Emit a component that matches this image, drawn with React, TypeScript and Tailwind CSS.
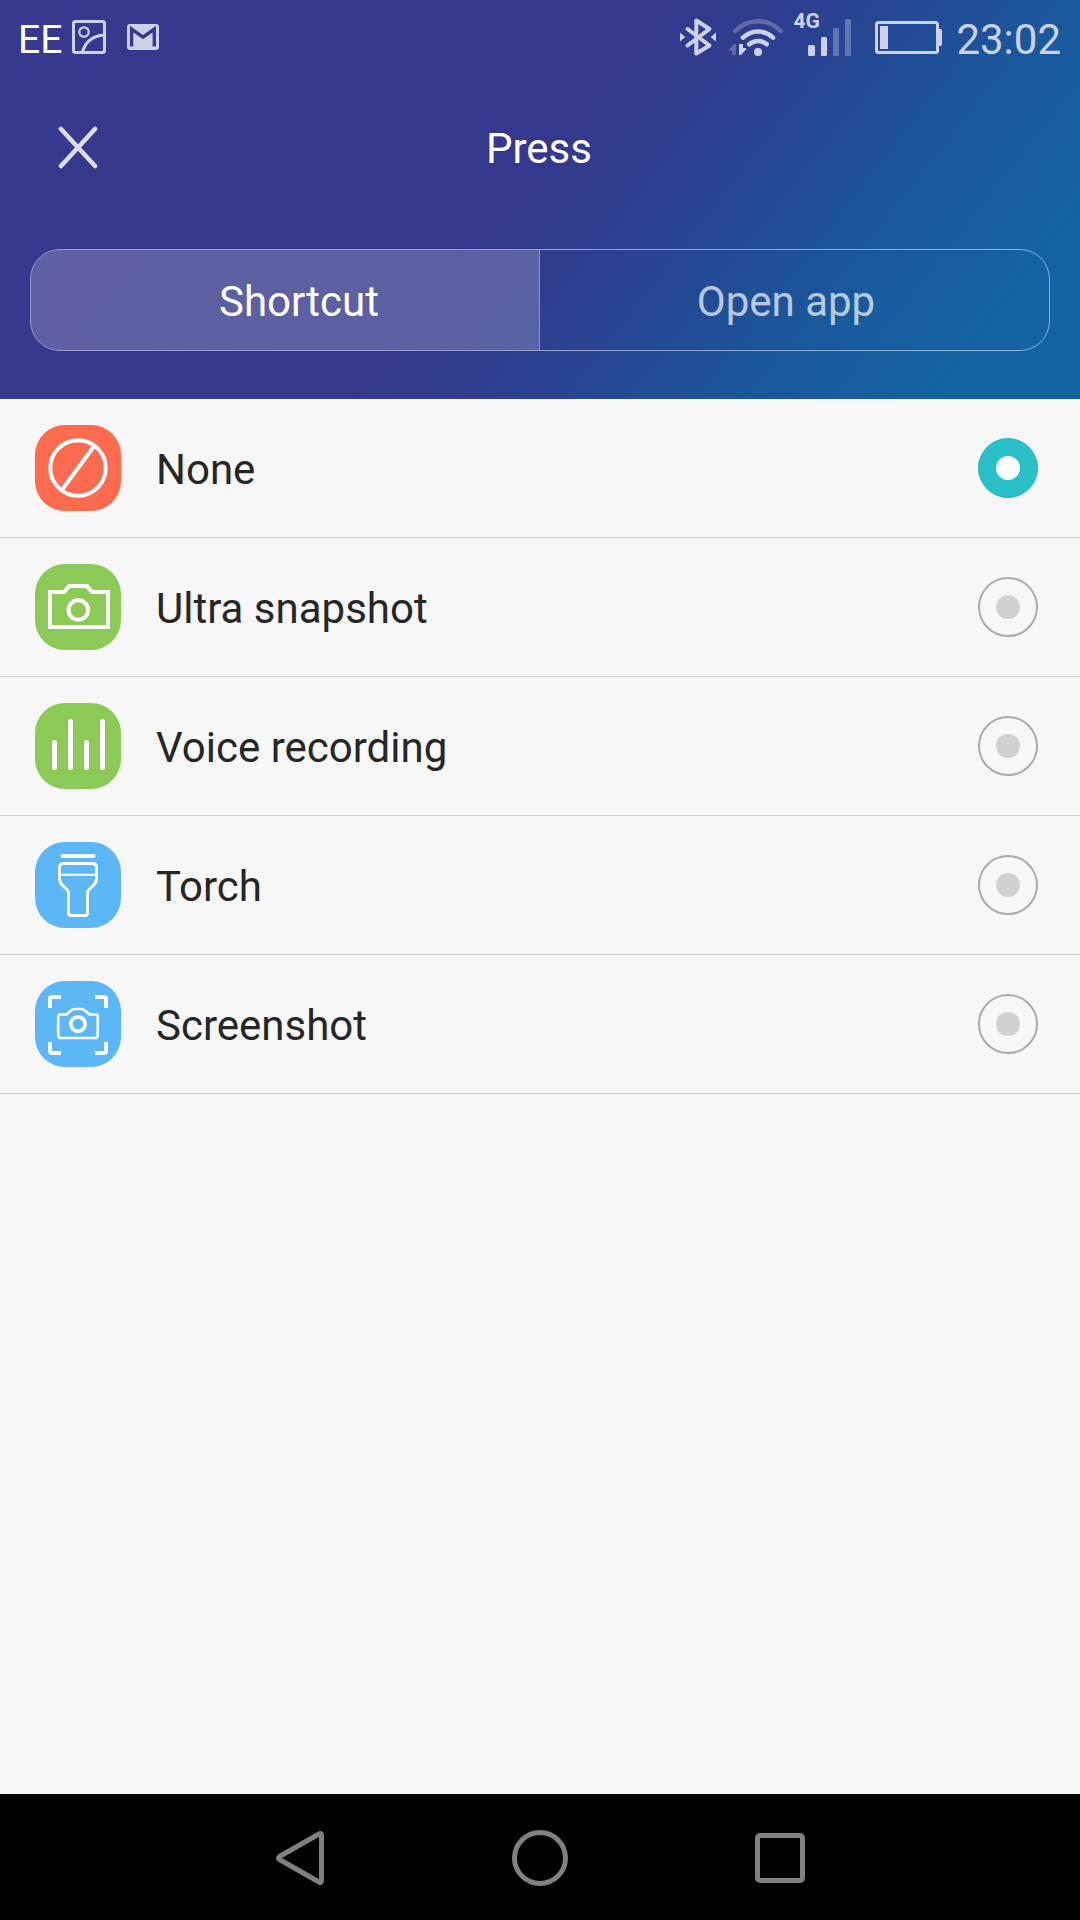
import React, { useState } from "react";

const NoneIcon = () => (
    <svg viewBox="0 0 86 86" className="size-[86px]" fill="none" stroke="white" strokeWidth="4">
        <circle cx="43" cy="43" r="27.7" />
        <path d="M59.5 20.5 26.5 65.5" />
    </svg>
);

const CameraIcon = () => (
    <svg viewBox="0 0 86 86" className="size-[86px]" fill="none" stroke="white" strokeWidth="4">
        <path d="M15 28H29.3L34 22H52L57 28H73V63H15Z" />
        <circle cx="43.3" cy="46" r="9.8" />
    </svg>
);

const VoiceIcon = () => (
    <svg viewBox="0 0 86 86" className="size-[86px]" fill="none" stroke="white" strokeWidth="5" strokeLinecap="round">
        <path d="M19.5 39.5V64.5M35.5 18.5V64.5M51.5 39.5V64.5M67.5 18.5V64.5" />
    </svg>
);

const TorchIcon = () => (
    <svg viewBox="0 0 86 86" className="size-[86px]" fill="none" stroke="white" strokeWidth="3">
        <path d="M27.5 14H58.5" strokeWidth="4" strokeLinecap="round" />
        <path d="M24.5 25.5q0-4 4-4H57.5q4 0 4 4V36C61.5 46 52.5 44.5 52.5 51V71q0 2.5-2.5 2.5H36q-2.5 0-2.5-2.5V51C33.5 44.5 24.5 46 24.5 36Z" />
        <path d="M24.5 32.7H61.5" strokeWidth="2" />
    </svg>
);

const ScreenshotIcon = () => (
    <svg viewBox="0 0 86 86" className="size-[86px]" fill="none" stroke="white" strokeWidth="4">
        <path d="M15 27V18q0-2 2-2H26M60 16H69q2 0 2 2V27M71 61V70q0 2-2 2H60M26 72H17q-2 0-2-2V61" />
        <path
            d="M26 33.3H31.5L36 29.5Q38 28 40 28H46Q48 28 50 29.5L54.5 33.3H60q2.8 0 2.8 2.8V54.2q0 2.8-2.8 2.8H26q-2.8 0-2.8-2.8V36.1q0-2.8 2.8-2.8Z"
            strokeWidth="2.7"
        />
        <circle cx="43" cy="43" r="7.2" strokeWidth="3.8" />
    </svg>
);

const options = [
    { label: "None", color: "bg-[#ff6b4f]", Icon: NoneIcon },
    { label: "Ultra snapshot", color: "bg-[#8bca57]", Icon: CameraIcon },
    { label: "Voice recording", color: "bg-[#8bca57]", Icon: VoiceIcon },
    { label: "Torch", color: "bg-[#5cb7f7]", Icon: TorchIcon },
    { label: "Screenshot", color: "bg-[#5cb7f7]", Icon: ScreenshotIcon },
];

// Every status icon is 74px tall, its viewBox starts at its own x on the bar
const StatusBar = () => (
    <div className="flex h-[74px] items-start justify-between pl-[18px] pr-[19px] text-[#cdd1e7]">
        <div className="flex items-start">
            <span className="w-[54px] pt-[18px] text-[39px] leading-[44px] text-white">EE</span>
            <svg viewBox="72 0 34 74" className="h-[74px] w-[34px]" fill="none" stroke="currentColor">
                <rect x="73.5" y="21.5" width="31" height="31" rx="2" strokeWidth="3" />
                <circle cx="84" cy="32" r="4.7" strokeWidth="2.3" />
                <path d="M82.5 52C85 42 93 35.5 104 35.3" strokeWidth="3" />
            </svg>
            <svg viewBox="127 0 32 74" className="ml-[21px] h-[74px] w-[32px]">
                <rect x="127" y="24" width="32" height="26" rx="3" fill="currentColor" />
                <path d="M131.6 46.5V29L143 37.2L154.3 29V46.5" fill="none" stroke="#38398e" strokeWidth="3.4" />
            </svg>
        </div>
        <div className="flex items-start">
            <svg viewBox="680 0 36 74" className="h-[74px] w-[36px]" fill="none" stroke="currentColor">
                <path
                    d="M687.5 29 709.5 45.5 696.3 53.5V20.5L709.5 29 687.5 45.5"
                    strokeWidth="4"
                    strokeLinecap="round"
                    strokeLinejoin="round"
                />
                <path d="M680 32.5 685.3 37 680 41.5ZM716 32.5 710.7 37 716 41.5Z" fill="currentColor" stroke="none" />
            </svg>
            <svg
                viewBox="728 0 56 74"
                className="ml-[12px] h-[74px] w-[56px]"
                fill="none"
                stroke="currentColor"
                strokeWidth="4.5"
                strokeLinecap="round"
            >
                <path d="M735.3 31Q745 21.3 758 21.3T780.7 31" opacity="0.3" />
                <path d="M743 37.7Q749.5 31.5 758 31.5T773 37.7" />
                <path d="M749.3 44.3Q753 41 758 41T766.7 44.3" />
                <circle cx="758" cy="52" r="4" fill="currentColor" stroke="none" />
                <path d="M736 44V55H732V50.5H729V49.5L734 44Z" fill="currentColor" stroke="none" opacity="0.3" />
                <path d="M739 44H743V48H746V49.5L741 55H739Z" fill="currentColor" stroke="none" />
            </svg>
            <div className="ml-[9px] flex h-[74px] items-start">
                <span className="w-[15px] whitespace-nowrap pt-[10px] text-[21px] font-bold leading-[22px]">4G</span>
                <svg viewBox="808 0 43 74" className="h-[74px] w-[43px]" fill="currentColor">
                    <rect x="808" y="45" width="7" height="11" rx="1.5" />
                    <rect x="821" y="37" width="6" height="19" rx="1.5" />
                    <rect x="833" y="28" width="6" height="28" rx="1.5" opacity="0.35" />
                    <rect x="845" y="19" width="6" height="37" rx="1.5" opacity="0.35" />
                </svg>
            </div>
            <svg viewBox="875 0 67 74" className="ml-[24px] h-[74px] w-[67px]" fill="currentColor">
                <rect x="876.5" y="22.5" width="61" height="30" rx="2" fill="none" stroke="currentColor" strokeWidth="3" />
                <rect x="880" y="26" width="8" height="23" />
                <path d="M938 29H940.5Q942 29 942 31V44Q942 46 940.5 46H938Z" />
            </svg>
            <span className="ml-[14px] pt-[15px] text-[42px] leading-[49px]">23:02</span>
        </div>
    </div>
);

const App = () => {
    const [selected, setSelected] = useState("None");

    return (
        <div className="flex h-[1920px] w-[1080px] flex-col bg-[#f7f7f7] font-['Roboto',sans-serif]">
            <header className="h-[399px] bg-[linear-gradient(128deg,#37398f_0%,#35388c_47%,#2f3d8f_56%,#254894_65%,#1e5298_72%,#185b9e_80%,#1462a2_90%)]">
                <StatusBar />
                <div className="grid h-[148px] grid-cols-3 items-center px-[56px]">
                    <button className="justify-self-start">
                        <svg viewBox="0 0 44 44" className="size-[44px]" fill="none" stroke="#dcdcec" strokeWidth="4.5" strokeLinecap="round">
                            <path d="M5 3 39 40M39 3 5 40" />
                        </svg>
                    </button>
                    <h1 className="pr-[2px] pt-[1px] text-center text-[42px] leading-[49px] text-white">Press</h1>
                </div>
                <div className="mx-[30px] mt-[27px] flex h-[102px] overflow-hidden rounded-[30px] border border-white/50">
                    <button className="w-[509px] border-r border-white/30 bg-white/20 pl-[28px] pt-[2px] text-[42px] text-white">
                        Shortcut
                    </button>
                    <button className="flex-1 pr-[17px] pt-[2px] text-[42px] text-white/70">
                        Open app
                    </button>
                </div>
            </header>
            <main className="flex-1">
                {options.map(({ label, color, Icon }) => (
                    <div
                        key={label}
                        onClick={() => setSelected(label)}
                        className="flex h-[139px] items-center border-b border-[#d0d0d0] pl-[35px] pr-[42px]"
                    >
                        <div className={`${color} size-[86px] rounded-[30px]`}>
                            <Icon />
                        </div>
                        <span className="ml-[35px] flex-1 pt-[3px] text-[42px] leading-[49px] text-[#262626]">{label}</span>
                        {selected === label ? (
                            <div className="flex size-[60px] items-center justify-center rounded-full border border-[#25b4bb] bg-[#29c0c7]">
                                <div className="size-[24px] rounded-full bg-white" />
                            </div>
                        ) : (
                            <div className="flex size-[60px] items-center justify-center rounded-full border-2 border-[#ababab]">
                                <div className="size-[24px] rounded-full bg-[#d1d1d1]" />
                            </div>
                        )}
                    </div>
                ))}
            </main>
            <nav className="flex h-[126px] items-center bg-black pl-[275px] pt-[2px]">
                <svg viewBox="0 0 50 58" className="h-[58px] w-[50px]" fill="none" stroke="#808080" strokeWidth="5" strokeLinejoin="round">
                    <path d="M46.5 6.5Q46.5 3.5 44 5L4.5 27.5Q2.5 29 4.5 30.5L44 53Q46.5 54.5 46.5 51.5Z" />
                </svg>
                <div className="ml-[187px] size-[56px] rounded-full border-[5px] border-[#808080]" />
                <div className="ml-[187px] size-[50px] rounded-[5px] border-[5px] border-[#808080]" />
            </nav>
        </div>
    );
};

export default App;
